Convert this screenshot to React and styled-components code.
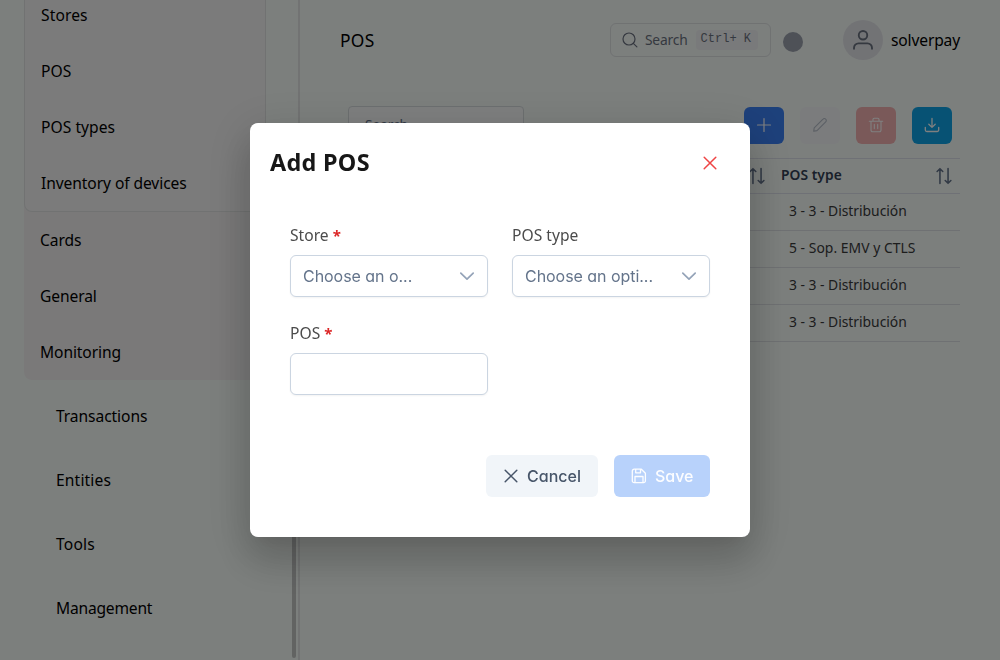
import React from 'react';
import styled, { createGlobalStyle } from 'styled-components';

const Global = createGlobalStyle`
  * { box-sizing: border-box; }
  body { margin: 0; overflow: hidden; font-family: "Noto Sans", sans-serif; color: #000; }
  svg { display: block; flex: none; }
`;
const Page = styled.div`display: flex; width: 1000px; height: 660px; overflow: hidden; background: #f9fefb;`;
const Sidebar = styled.aside`
  width: 300px; height: 660px; flex: none; display: flex; border-right: 2px solid #e4e7e6;
`;
const Nav = styled.nav`flex: 1; padding-left: 24px; min-width: 0;`;
const Track = styled.div`
  width: 6px; height: 658px; flex: none; display: flex; align-items: flex-end;
`;
const Thumb = styled.div`width: 4px; height: 410px; border-radius: 2px; background: #c4c6c5;`;
const Group = styled.div`width: 242px; height: 380px; background: #f4f3f3; border-radius: 0 0 8px 8px;`;
const SubGroup = styled.div`
  height: 212px; background: #f7f7f7; border: 1px solid #e2e5e4; border-top: 0; border-radius: 0 0 8px 8px;
  display: flex; flex-direction: column; justify-content: flex-end; overflow: hidden;
`;
const NavItem = styled.div`
  flex: none; height: ${p => p.$h || 56}px; padding-left: ${p => p.$indent || 16}px;
  display: flex; align-items: center; font-size: 15.6px; letter-spacing: ${p => p.$ls}px;
  white-space: nowrap;
`;
const RootList = styled.div`padding-top: 4px;`;

const Main = styled.main`width: 700px; flex: none; padding: 0 40px;`;
const Header = styled.header`height: 80px; display: flex; align-items: center;`;
const PageTitle = styled.h1`margin: 0; flex: 1; font-size: 17.4px; font-weight: 400; letter-spacing: 0.3px; padding-bottom: 1px;`;
const SearchBox = styled.div`
  width: 161px; height: 34px; border: 1px solid #e0e4e5; border-radius: 6px; padding: 0 12px 0 11px;
  display: flex; align-items: center; color: #6b7280; font-size: 13.8px; letter-spacing: -0.2px;
  span { margin-left: 7px; width: 43px; padding-bottom: 1px; }
`;
const Key = styled.kbd`
  margin-left: 8px; width: 63px; height: 20px; border-radius: 4px; background: #f3f4f6; color: #6b7280;
  font: 12px/18px "Liberation Mono", monospace; padding-left: 5px; white-space: pre; letter-spacing: 0;
`;
const Dot = styled.div`width: 20px; height: 20px; border-radius: 50%; background: #9ca3af; margin: 4px 0 0 12px;`;
const Avatar = styled.div`
  width: 40px; height: 40px; border-radius: 50%; background: #e5e7eb; margin: 0 8px 0 40px;
  display: flex; align-items: center; justify-content: center; color: #6b7280;
`;
const User = styled.div`width: 69px; font-size: 15.6px; letter-spacing: -0.15px; white-space: nowrap;`;

const Toolbar = styled.div`
  height: 78px; padding: 26px 8px 0; display: flex; justify-content: space-between; align-items: flex-start;
`;
const Filter = styled.div`
  width: 176px; height: 38px; border: 1px solid #d9dfe1; border-radius: 4px; background: #fdfefe;
  padding: 8px 16px; font-size: 13.6px; color: #64748b; line-height: 20px;
`;
const Actions = styled.div`display: flex; gap: 16px; padding-top: 1px;`;
const ActionButton = styled.button`
  width: 40px; height: 37px; border: 0; border-radius: 6px; padding: 0 0 1px; background: ${p => p.$bg}; color: ${p => p.$fg};
  display: flex; align-items: center; justify-content: center;
`;
const Table = styled.div`border-top: 1px solid #dfe3ec; color: #3a3a3a; font-size: 13.9px;`;
const HeadRow = styled.div`
  height: 35px; border-bottom: 1px solid #dfe3ec; display: flex; justify-content: flex-end; align-items: center;
  font-weight: 600; color: #334155; font-size: 13.8px;
  svg { color: #64748b; }
`;
const HeadCell = styled.div`
  display: flex; align-items: center; justify-content: space-between; width: 179px; padding: 0 7px 0 0; letter-spacing: 0.05px;
  span { padding-bottom: 3px; }
`;
const SortCell = styled.div`margin-right: 15px;`;
const Row = styled.div`
  height: 37px; border-bottom: 1px solid #dfe3e6; display: flex; align-items: center; padding: 0 0 3px 449px;
  letter-spacing: ${p => p.$ls}px; white-space: nowrap;
`;

const Overlay = styled.div`
  position: fixed; inset: 0; background: rgba(0, 0, 0, 0.5); display: flex; align-items: center; justify-content: center;
`;
const Dialog = styled.section`
  width: 500px; height: 414px; background: #fff; border-radius: 8px; padding: 20px;
  box-shadow: 0 11px 15px -7px rgba(0,0,0,.06), 0 24px 38px 3px rgba(0,0,0,.14), 0 9px 46px 8px rgba(0,0,0,.1);
`;
const DialogHead = styled.div`
  height: 40px; display: flex; align-items: center; justify-content: space-between; padding-right: 12px; color: #ef4444;
  h2 { margin: 0; padding-bottom: 2px; color: #171717; font-size: 23.4px; font-weight: 700; letter-spacing: 0.3px; }
`;
const Form = styled.div`
  padding: 40px 20px 0; display: grid; grid-template-columns: 198px 198px; column-gap: 24px; row-gap: 24px;
`;
const Field = styled.div`height: 74px;`;
const Label = styled.label`
  display: block; height: 32px; line-height: 24px; font-size: 15.6px; letter-spacing: 0.02px; color: #4b4b4b;
  b { color: #dc2626; font-size: 15px; }
`;
const Control = styled.div`
  height: 42px; border: 1px solid #cbd5e1; border-radius: 6px; background: #fff; padding: 0 12px;
  display: flex; align-items: center; justify-content: space-between; color: #64748b;
  box-shadow: 0 1px 2px rgba(18, 18, 23, 0.05);
  font: 16px Inter, sans-serif; letter-spacing: -0.04px; font-feature-settings: "cv02", "cv03", "cv04", "cv11";
  svg { color: #94a3b8; }
`;
const Footer = styled.div`display: flex; justify-content: flex-end; gap: 16px; padding: 60px 20px 0 0;`;
const Button = styled.button`
  width: ${p => p.$w}px; height: 42px; border: 0; border-radius: 6px; padding: 0 0 0 17px; background: ${p => p.$bg}; color: ${p => p.$fg};
  display: flex; align-items: center; gap: 8px;
  font: 500 16px Inter, sans-serif; font-feature-settings: "cv02", "cv03", "cv04", "cv11";
`;

const Icon = ({ size = 16, w = 1.2, children }) => (
  <svg width={size} height={size} viewBox="0 0 16 16" fill="none" stroke="currentColor" strokeWidth={w}
    strokeLinecap="round" strokeLinejoin="round">{children}</svg>
);
const Sort = () => <Icon size={18} w={1.4}><path d="M4.4 14.7V1.5M1.9 4 4.4 1.5 6.9 4M11.6 1.3v13.2M9.1 12l2.5 2.5 2.5-2.5" /></Icon>;
const Cross = ({ size }) => <Icon size={size} w={1.5}><path d="m2.2 2.2 11.6 11.6M13.8 2.2 2.2 13.8" /></Icon>;
const Chevron = () => <Icon w={1.7}><path d="m1.8 5.2 6.2 6 6.2-6" /></Icon>;

const subItems = [['Stores', 0.1], ['POS', 0.1], ['POS types', 0.05], ['Inventory of devices', -0.09]];
const groupItems = [['Cards', -0.1], ['General', -0.1], ['Monitoring', -0.1]];
const rootItems = [['Transactions', -0.08], ['Entities', 0.15], ['Tools', 0.2], ['Management', -0.2]];
const rows = [['3 - 3 - Distribución', -0.03], ['5 - Sop. EMV y CTLS', 0.03], ['3 - 3 - Distribución', -0.03], ['3 - 3 - Distribución', -0.03]];

export default function App() {
  return (
    <>
      <Global />
      <Page>
        <Sidebar>
          <Nav>
            <Group>
              <SubGroup>
                {subItems.map(([t, ls]) => <NavItem key={t} $ls={ls}>{t}</NavItem>)}
              </SubGroup>
              {groupItems.map(([t, ls]) => <NavItem key={t} $ls={ls}>{t}</NavItem>)}
            </Group>
            <RootList>
              {rootItems.map(([t, ls]) => <NavItem key={t} $ls={ls} $h={64} $indent={32}>{t}</NavItem>)}
            </RootList>
          </Nav>
          <Track><Thumb /></Track>
        </Sidebar>
        <Main>
          <Header>
            <PageTitle>POS</PageTitle>
            <SearchBox>
              <Icon><circle cx="7" cy="7" r="6" /><path d="m11.3 11.3 3.6 3.6" /></Icon>
              <span>Search</span><Key>Ctrl+ K</Key>
            </SearchBox>
            <Dot />
            <Avatar>
              <Icon size={20} w={1.5}><circle cx="8" cy="4.2" r="3.4" /><path d="M.8 15v-.7a3.6 3.6 0 0 1 3.6-3.6h7.2a3.6 3.6 0 0 1 3.6 3.6v.7" /></Icon>
            </Avatar>
            <User>solverpay</User>
          </Header>
          <Toolbar>
            <Filter>Search</Filter>
            <Actions>
              <ActionButton $bg="#3b82f6" $fg="#fff"><Icon><path d="M8 1.5v13M1.5 8h13" /></Icon></ActionButton>
              <ActionButton $bg="#f6f9fb" $fg="#b8bfca"><Icon w={1.1}><path d="M1.7 14.3l.5-3.4L11 2.1a1.8 1.8 0 0 1 2.7 0 1.8 1.8 0 0 1 0 2.7L5 13.6z" /></Icon></ActionButton>
              <ActionButton $bg="#f4b2b2" $fg="#fff"><Icon w={1.1}><path d="M1.3 4.2h13.4M3 4.2v9a1.5 1.5 0 0 0 1.5 1.5h7a1.5 1.5 0 0 0 1.5-1.5v-9M5 4.2V2.5a1.2 1.2 0 0 1 1.2-1.2h3.6A1.2 1.2 0 0 1 11 2.5v1.7M6.3 7.4v4.2M9.7 7.4v4.2" /></Icon></ActionButton>
              <ActionButton $bg="#0ea5e9" $fg="#fff"><Icon w={1.3}><path d="M8 1.5v8.8M4.8 7.2 8 10.4l3.2-3.2M1.3 10.3V13a1.5 1.5 0 0 0 1.5 1.5h10.4a1.5 1.5 0 0 0 1.5-1.5v-2.7" /></Icon></ActionButton>
            </Actions>
          </Toolbar>
          <Table>
            <HeadRow><SortCell><Sort /></SortCell><HeadCell><span>POS type</span><Sort /></HeadCell></HeadRow>
            {rows.map(([t, ls], i) => <Row key={i} $ls={ls}>{t}</Row>)}
          </Table>
        </Main>
      </Page>
      <Overlay>
        <Dialog>
          <DialogHead><h2>Add POS</h2><Cross size={16} /></DialogHead>
          <Form>
            <Field><Label>Store <b>*</b></Label><Control>Choose an o...<Chevron /></Control></Field>
            <Field><Label>POS type</Label><Control>Choose an opti...<Chevron /></Control></Field>
            <Field><Label>POS <b>*</b></Label><Control /></Field>
          </Form>
          <Footer>
            <Button $w={112} $bg="#f1f5f9" $fg="#475569"><Cross size={16} />Cancel</Button>
            <Button $w={96} $bg="#b8d2fb" $fg="#fcfdff">
              <Icon w={1.3}><path d="M3.2 1.2h7.2l4 4v7.6a1.9 1.9 0 0 1-1.9 1.9H3.2a1.9 1.9 0 0 1-1.9-1.9V3.1a1.9 1.9 0 0 1 1.9-1.9zM4.7 1.2v3.6h4.8V1.2M4 14.7V8.5h8v6.2" /></Icon>Save
            </Button>
          </Footer>
        </Dialog>
      </Overlay>
    </>
  );
}
